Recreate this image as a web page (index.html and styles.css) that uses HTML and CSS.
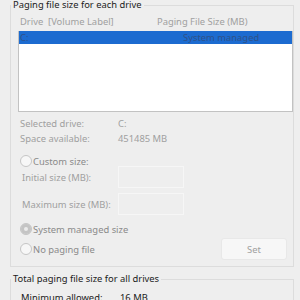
FILE: index.html
```html
<!DOCTYPE html>
<html lang="en">
<head>
  <meta charset="UTF-8" />
  <title>Virtual Memory</title>
  <link rel="stylesheet" href="styles.css">
</head>
<body>
  <fieldset class="group">
    <legend>Paging file size for each drive</legend>
    <div class="list-head">
      <span class="col-drive">Drive&nbsp; [Volume Label]</span>
      <span class="col-size">Paging File Size (MB)</span>
    </div>
    <div class="listbox">
      <div class="list-row selected">
        <span class="col-drive">C:</span>
        <span class="col-size">System managed</span>
      </div>
    </div>

    <div class="info">
      <span>Selected drive:</span><span>C:</span>
      <span>Space available:</span><span>451485 MB</span>
    </div>

    <label class="radio custom">
      <span class="dot"></span>
      <span>Custom size:</span>
    </label>
    <div class="size-row first">
      <span>Initial size (MB):</span>
      <span class="input"></span>
    </div>
    <div class="size-row">
      <span>Maximum size (MB):</span>
      <span class="input"></span>
    </div>

    <label class="radio system">
      <span class="dot checked"></span>
      <span>System managed size</span>
    </label>
    <div class="last-row">
      <label class="radio">
        <span class="dot"></span>
        <span>No paging file</span>
      </label>
      <button class="set-btn" disabled>Set</button>
    </div>
  </fieldset>

  <fieldset class="group total">
    <legend>Total paging file size for all drives</legend>
    <div class="total-row">
      <span>Minimum allowed:</span><span>16 MB</span>
    </div>
  </fieldset>
</body>
</html>
```

FILE: styles.css
```css
:root {
  --bg: #eeeeee;
  --line: #dcdcdc;
  --muted: #a0a0a0;
  --text: #1b1b1b;
}

html {
  height: 300px;
  overflow: hidden;
}

body {
  margin: 0;
  background: var(--bg);
  font-family: "Noto Sans", "Open Sans", sans-serif;
  font-size: 9.4px;
  color: var(--text);
  white-space: nowrap;
}

.group {
  margin: 0 0 0 10px;
  width: 284px;
  box-sizing: border-box;
  padding: 0 0 6px;
  border: 1px solid var(--line);
  min-width: 0;
}

.group legend {
  padding: 0 2px;
  line-height: 10px;
  color: var(--text);
}

.list-head {
  display: flex;
  padding: 4px 0 1px 9px;
  line-height: 16px;
  color: var(--muted);
}

.col-drive {
  width: 137px;
}

.listbox {
  margin-left: 7px;
  height: 81px;
  box-sizing: border-box;
  background: #fff;
  border: 1px solid #c2c2c2;
  border-top: none;
}

.list-row {
  display: flex;
  height: 13px;
  line-height: 13px;
  padding-left: 1px;
}

.list-row.selected {
  background: #1c6bd0;
  color: #2f5289;
}

.list-row .col-drive {
  width: 163px;
}

.info {
  display: grid;
  grid-template-columns: 98px 1fr;
  margin-top: 4px;
  padding-left: 9px;
  line-height: 15px;
  color: var(--muted);
}

.radio {
  display: flex;
  align-items: center;
  gap: 1px;
  height: 12px;
  padding-left: 9px;
  color: #8a8a8a;
}

.radio.custom {
  margin-top: 9px;
}

.radio.system {
  margin-top: 8px;
}

.dot {
  width: 10px;
  height: 10px;
  border-radius: 50%;
  border: 1px solid #c6c6c6;
  background: #f7f7f7;
}

.dot.checked {
  background: #c4c4c4;
  box-shadow: inset 0 0 0 3px #c4c4c4, inset 0 0 0 5px #ebebeb;
}

.size-row {
  display: flex;
  align-items: center;
  height: 22px;
  margin-top: 5px;
  padding-left: 11px;
  color: var(--muted);
}

.size-row.first {
  margin-top: -1px;
}

.size-row > span:first-child {
  width: 96px;
}

.input {
  width: 66px;
  height: 22px;
  box-sizing: border-box;
  border: 1px solid #f6f6f6;
}

.last-row {
  display: flex;
  justify-content: space-between;
  align-items: center;
  margin-top: 3px;
  padding-right: 6px;
}

.set-btn {
  width: 66px;
  height: 22px;
  padding: 0;
  font: inherit;
  color: var(--muted);
  background: #f7f7f7;
  border: 1px solid #e8e8e8;
  border-radius: 3px;
}

.group.total {
  margin-top: 7px;
  padding-bottom: 10px;
}

.total-row {
  display: grid;
  grid-template-columns: 99px 1fr;
  padding: 6px 0 0 10px;
  line-height: 16px;
}
```
